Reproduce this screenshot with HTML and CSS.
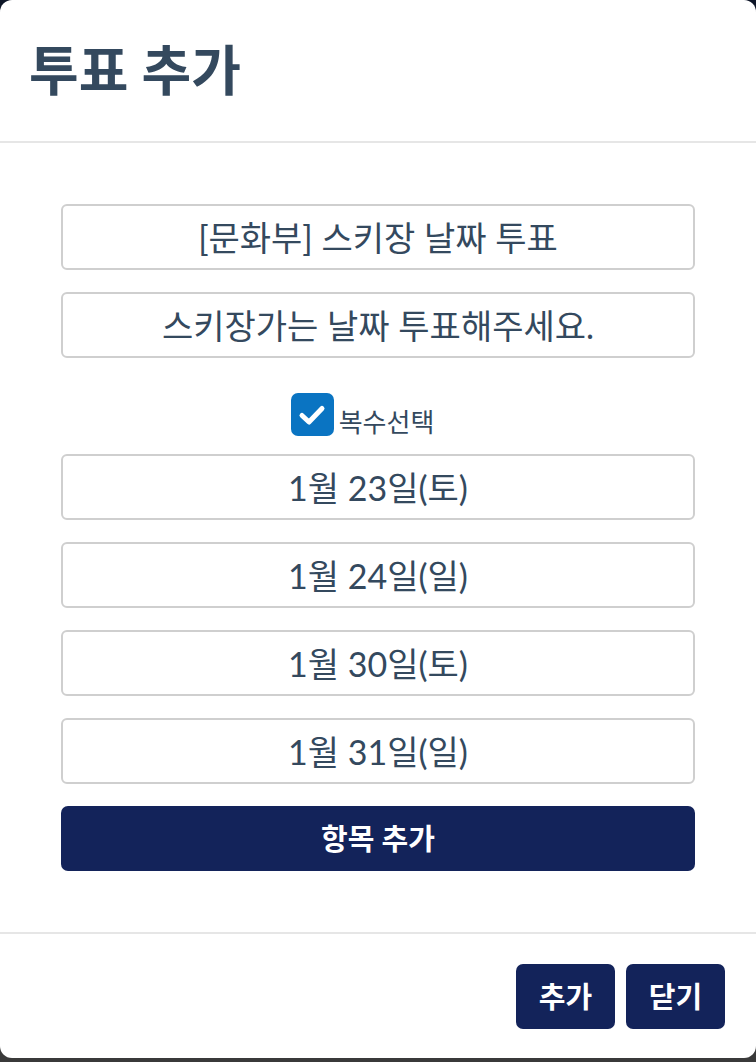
FILE: index.html
```html
<!DOCTYPE html>
<html lang="ko">
<head>
<meta charset="utf-8">
<link rel="stylesheet" href="styles.css">
</head>
<body>
<div class="modal">
  <div class="modal-header">
    <h1 class="title">투표 추가</h1>
  </div>
  <div class="modal-body">
    <div class="field">[문화부] 스키장 날짜 투표</div>
    <div class="field">스키장가는 날짜 투표해주세요.</div>
    <label class="check-row">
      <span class="checkbox">
        <svg width="30" height="30" viewBox="0 0 30 30"><path d="M5 15.5 L12 22 L25 8.5" fill="none" stroke="#fff" stroke-width="5" stroke-linecap="round" stroke-linejoin="round"/></svg>
      </span>
      <span class="check-label">복수선택</span>
    </label>
    <div class="field">1월 23일(토)</div>
    <div class="field">1월 24일(일)</div>
    <div class="field">1월 30일(토)</div>
    <div class="field">1월 31일(일)</div>
    <button class="btn btn-block">항목 추가</button>
  </div>
  <div class="modal-footer">
    <button class="btn btn-small">추가</button>
    <button class="btn btn-small">닫기</button>
  </div>
</div>
</body>
</html>
```

FILE: styles.css
```css
html, body {
  margin: 0;
  padding: 0;
}
body {
  width: 756px;
  height: 1062px;
  background: linear-gradient(#0e1628, #3a3a3a);
  font-family: Lato, "Noto Sans CJK KR", sans-serif;
  color: #34495e;
  overflow: hidden;
}
.modal {
  width: 756px;
  height: 1058px;
  background: #fff;
  border-radius: 12px;
  display: flex;
  flex-direction: column;
  box-sizing: border-box;
}
.modal-header {
  height: 143px;
  box-sizing: border-box;
  border-bottom: 2px solid #e6e6e6;
  padding: 0 29px;
  display: flex;
  align-items: center;
}
.title {
  margin: 0;
  font-size: 54px;
  font-weight: 700;
  line-height: 1;
  padding-bottom: 0;
}
.modal-body {
  padding: 61px 61px 61px;
  display: flex;
  flex-direction: column;
  gap: 22px;
  border-bottom: 2px solid #e6e6e6;
}
.field {
  height: 66px;
  box-sizing: border-box;
  border: 2px solid #cfcfcf;
  border-radius: 6px;
  display: flex;
  align-items: center;
  justify-content: center;
  font-size: 34px;
  font-weight: 400;
  padding-bottom: 2px;
}
.check-row {
  display: flex;
  justify-content: center;
  align-items: flex-end;
  gap: 5px;
  margin: 13px 0 -4px;
  padding-right: 31px;
}
.checkbox {
  width: 43px;
  height: 43px;
  border-radius: 7px;
  background: #0a74c2;
  display: flex;
  align-items: center;
  justify-content: center;
}
.check-label {
  font-size: 26px;
  font-weight: 400;
  line-height: 1;
  padding-bottom: 1px;
}
.btn {
  background: #13235a;
  color: #fff;
  border: none;
  border-radius: 7px;
  font-family: Lato, "Noto Sans CJK KR", sans-serif;
  font-weight: 700;
  font-size: 29px;
  padding: 0 0 3px;
  cursor: pointer;
}
.btn-block {
  height: 65px;
  width: 100%;
}
.modal-footer {
  display: flex;
  justify-content: flex-end;
  gap: 11px;
  padding: 30px 31px 0;
}
.btn-small {
  width: 99px;
  height: 65px;
}
```
